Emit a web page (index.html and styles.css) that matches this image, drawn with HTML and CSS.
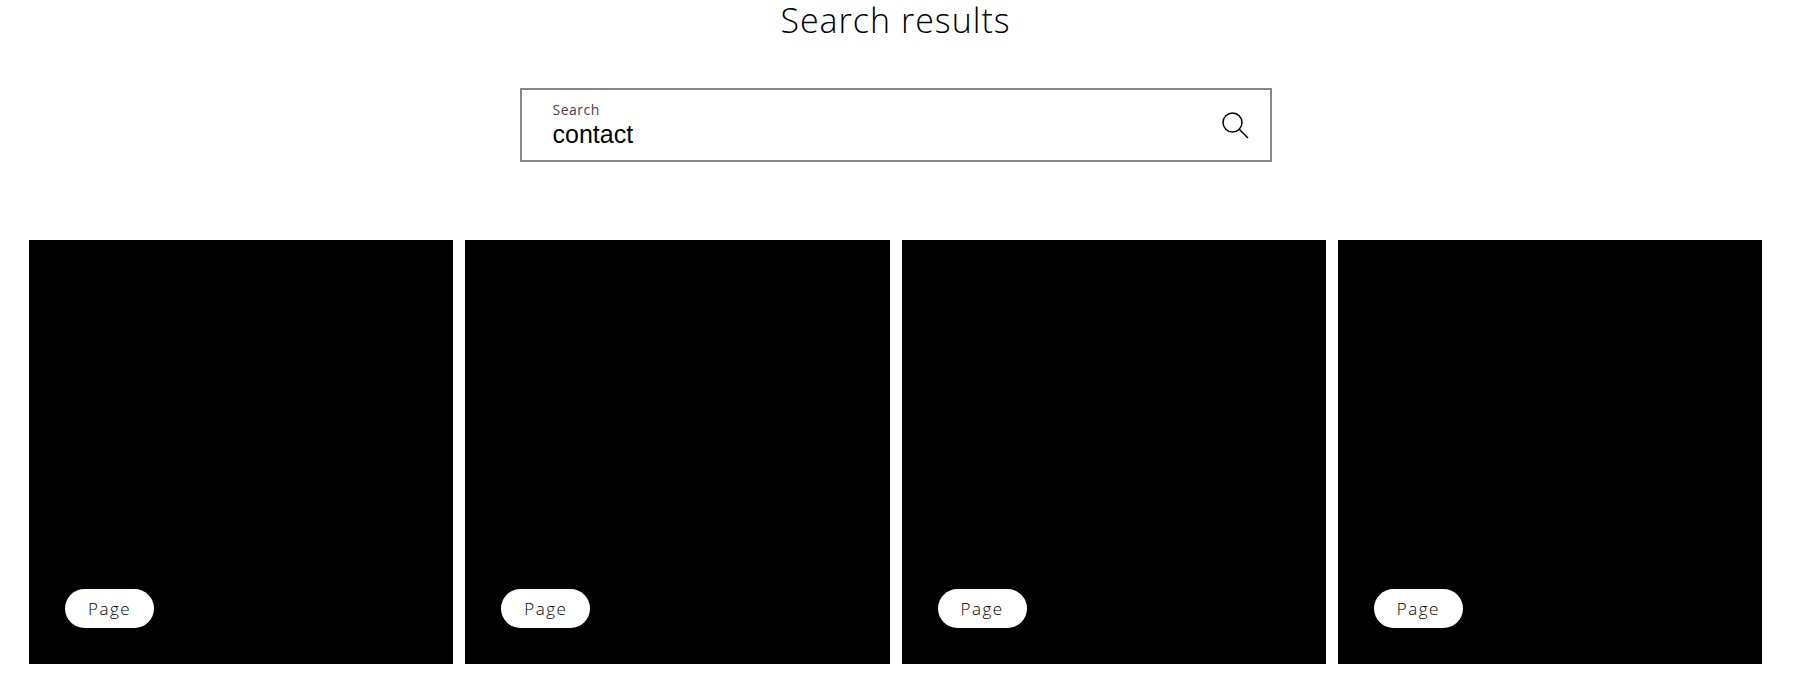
FILE: index.html
```html
<!DOCTYPE html>
<html lang="en">
<head>
    <meta charset="UTF-8">
    <meta name="viewport" content="width=device-width, initial-scale=1.0">
    <title>Search results</title>
    <link rel="stylesheet" href="styles.css">
</head>
<body>
    <main class="container">
        <h1>Search results</h1>
        <section class="search-bar">
            <div class="search-field">
                <label for="search-input">Search</label>
                <input type="text" id="search-input" value="contact">
            </div>
            <button class="search-btn" aria-label="Search">
                <svg width="28" height="28" viewBox="0 0 28 28" fill="none" stroke="#000" stroke-width="1.5">
                    <circle cx="11.5" cy="11.5" r="9.5"/>
                    <path d="M18.5 18.5L27 27"/>
                </svg>
            </button>
        </section>
        <section class="results">
            <a class="card" href="#"><span class="tag">Page</span></a>
            <a class="card" href="#"><span class="tag">Page</span></a>
            <a class="card" href="#"><span class="tag">Page</span></a>
            <a class="card" href="#"><span class="tag">Page</span></a>
        </section>
    </main>
</body>
</html>
```

FILE: styles.css
```css
body {
    background-color: white;
    color: black;
    font-family: "Open Sans", "Noto Sans", sans-serif;
    margin: 0;
}
.container {
    box-sizing: border-box;
    width: 1791px;
    padding: 0 29px;
}
h1 {
    font-size: 34px;
    font-weight: 300;
    letter-spacing: 1px;
    line-height: 40px;
    text-align: center;
    margin: 0 0 48px;
}
.search-bar {
    box-sizing: border-box;
    display: flex;
    align-items: center;
    justify-content: space-between;
    width: 752px;
    height: 74px;
    margin: 0 auto 78px;
    padding: 0 21px 0 31px;
    border: 2px solid #888;
}
.search-field {
    display: flex;
    flex-direction: column;
}
label {
    color: #4b3b55;
    font-size: 14px;
    letter-spacing: 0.5px;
    line-height: 18px;
}
input[type="text"] {
    border: none;
    outline: none;
    padding: 0;
    font-family: "Liberation Sans", Arial, sans-serif;
    font-size: 25px;
    line-height: 30px;
    height: 30px;
    color: black;
}
.search-btn {
    display: flex;
    padding: 0;
    background: none;
    border: none;
    cursor: pointer;
}
.results {
    display: grid;
    grid-template-columns: repeat(4, 1fr);
    gap: 12px;
}
.card {
    display: flex;
    align-items: flex-end;
    aspect-ratio: 1;
    padding: 0 36px 36px;
    box-sizing: border-box;
    background-color: black;
    color: black;
    text-decoration: none;
}
.tag {
    background-color: white;
    border-radius: 20px;
    font-size: 17px;
    font-weight: 300;
    letter-spacing: 1.5px;
    line-height: 39px;
    padding: 0 23px;
}
```
